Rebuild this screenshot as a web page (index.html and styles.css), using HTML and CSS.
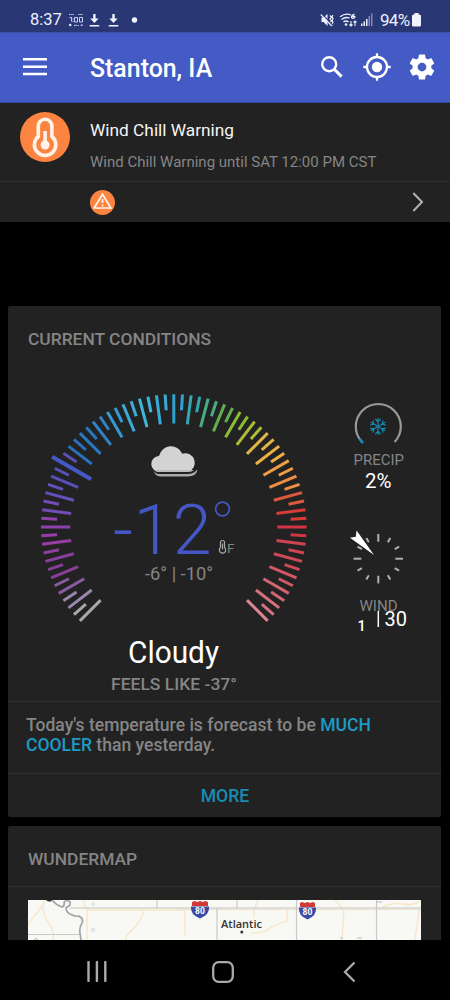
FILE: index.html
```html
<!DOCTYPE html>
<html lang="en">
<head>
<meta charset="utf-8">
<title>Stanton, IA</title>
<link rel="stylesheet" href="styles.css">
</head>
<body>
<div class="phone">
  <header class="status">
    <span class="clock">8:37</span>
    <svg class="status-left" width="80" height="16" viewBox="0 0 80 16">
      <g fill="none" stroke="#c9d0f2" stroke-width="1">
        <path d="M1 1.5h5M10 1.5h5" stroke-dasharray="1.5 .7"/>
        <path d="M1.5 4.5h2v4M6.500 4.500h3v4.500h-3zM11.500 4.500h3v4.500h-3z"/>
        <path d="M5 5.500v1M5 8v1"/>
        <path d="M6 12.500h2.500M9.500 12.500h2M12.500 12.500h2.500M8 11.500v2M14 11v2" stroke-dasharray="1.300 .7"/>
      </g>
      <circle cx="2.200" cy="12" r="1.300" fill="#dce1fa"/>
      <g fill="#f1f3ff">
        <path d="M25.200 1h2.400v4.500h3L26.400 10 22.200 5.500h3zM21.700 12h9.500v1.400h-9.500zM44.300 1h2.400v4.500h3L45.500 10 41.300 5.500h3zM40.800 12h9.500v1.400h-9.500z"/>
        <circle cx="66.500" cy="7" r="2.700"/>
      </g>
    </svg>
    <svg class="status-right" width="56" height="16" viewBox="0 0 56 16">
      <path d="M1.500 4.500h2l4-3.500v12l-4-4h-2z" fill="#edf0ff"/>
      <path d="M10 2.500l1.500 1.800-1.500 1.800 1.500 1.800-1.500 1.800 1.500 1.800M13 2l-1 1.800 1 1.800-1 1.800 1 1.800-1 1.800 1 1.800" fill="none" stroke="#edf0ff" stroke-width="1.200"/>
      <path d="M1.500 .5L13 12.500" stroke="#2b3878" stroke-width="1.200"/>
      <path d="M.8 1.500l11 11.500" stroke="#edf0ff" stroke-width="1.100"/>
      <g fill="none" stroke="#edf0ff" stroke-width="1.300">
        <path d="M20 3.800Q25.500-.2 31 2M21.500 6.500q4-3 8-1.500M23.500 9q2.500-2 5 0M34.500 1q-3 1-3 3.500 1.500 1.500 3 0t-2.500-1.500"/>
        <path d="M31 8v5m-1.500-1.500L31 13l1.500-1.500M35 13V8m-1.500 1.500L35 8l1.500 1.500" stroke-width="1.100"/>
      </g>
      <circle cx="26" cy="11.500" r="1.300" fill="#edf0ff"/>
      <path d="M41 10.500h1.500V13H41zM43.500 8.500H45V13h-1.500zM46 6h1.500v7H46z" fill="#edf0ff"/>
      <path d="M48.500 3H50v10h-1.500zM51 .5h1.500V13H51z" fill="#8089b6"/>
    </svg>
    <span class="percent">94%</span>
    <svg class="battery" width="9" height="14" viewBox="0 0 9 14"><path d="M2.500 0h4v1.500h1Q9 1.500 9 3v9q0 1.500-1.500 1.500h-6Q0 13.500 0 12V3q0-1.500 1.500-1.500h1z" fill="#f1f3ff"/></svg>
  </header>

  <nav class="appbar">
    <svg class="menu" width="24" height="18" viewBox="0 0 24 18"><path d="M0 1.300h24M0 8.700h24M0 16h24" stroke="#fff" stroke-width="2.500"/></svg>
    <h1 class="place">Stanton, IA</h1>
    <svg class="action search" width="24" height="24" viewBox="0 0 24 24" fill="none" stroke="#fff"><circle cx="9.200" cy="9.200" r="7" stroke-width="2.400"/><path d="M14.300 14.300l7.300 7.300" stroke-width="3"/></svg>
    <svg class="action locate" width="28" height="28" viewBox="0 0 28 28" fill="none" stroke="#fff" stroke-width="2.300"><circle cx="14" cy="14" r="10"/><circle cx="14" cy="14" r="5.200" fill="#fff" stroke="none"/><path d="M14 .3v4M14 23.700v4M.3 14h4M23.700 14h4"/></svg>
    <svg class="action gear" width="30" height="30" viewBox="0 0 24 24" fill="#fff"><path d="M19.430 12.980c.04-.32.07-.64.07-.98s-.03-.66-.07-.98l2.110-1.650c.19-.15.24-.42.12-.64l-2-3.460c-.12-.22-.39-.3-.61-.22l-2.490 1c-.52-.4-1.080-.73-1.690-.98l-.38-2.650C14.460 2.180 14.250 2 14 2h-4c-.25 0-.46.18-.49.42l-.38 2.650c-.61.25-1.170.59-1.690.98l-2.490-1c-.23-.09-.49 0-.61.22l-2 3.460c-.13.22-.07.49.12.64l2.110 1.650c-.04.32-.07.65-.07.98s.03.66.07.98l-2.110 1.650c-.19.15-.24.42-.12.64l2 3.460c.12.22.39.3.61.22l2.490-1c.52.4 1.080.73 1.690.98l.38 2.650c.03.24.24.42.49.42h4c.25 0 .46-.18.49-.42l.38-2.650c.61-.25 1.170-.59 1.690-.98l2.490 1c.23.09.49 0 .61-.22l2-3.460c.12-.22.07-.49-.12-.64zM12 15.500A3.500 3.500 0 1 1 12 8.500a3.500 3.500 0 0 1 0 7z"/></svg>
  </nav>

  <section class="alert">
    <div class="alert-main">
      <svg class="alert-icon" width="50" height="50" viewBox="0 0 50 50">
        <circle cx="25" cy="25" r="25" fill="#fd8440"/>
        <path d="M18.300 24.500V14a6.800 6.800 0 0 1 13.600 0v10.500a10.700 10.700 0 1 1-13.600 0z" fill="none" stroke="#fff3ea" stroke-width="3.600"/>
        <circle cx="25.100" cy="33" r="4.500" fill="#fff3ea"/><path d="M25.100 33V19" stroke="#fff3ea" stroke-width="3.600"/>
      </svg>
      <div class="alert-text">
        <h2 class="alert-title">Wind Chill Warning</h2>
        <p class="alert-desc">Wind Chill Warning until SAT 12:00 PM CST</p>
      </div>
    </div>
    <div class="alert-more">
      <svg width="25" height="25" viewBox="0 0 25 25"><circle cx="12.500" cy="12.500" r="12.500" fill="#fd8440"/><path d="M12.500 4.200L20.800 18H4.200z" fill="none" stroke="#fff3ea" stroke-width="1.700"/><path d="M12.500 9v4M12.500 14.500v1.700" stroke="#fff3ea" stroke-width="1.700"/></svg>
      <svg width="12" height="20" viewBox="0 0 12 20"><path d="M1.300 1l8.700 9-8.700 9" fill="none" stroke="#b2b2b2" stroke-width="2"/></svg>
    </div>
  </section>

  <main class="cards">
    <section class="card conditions">
      <h2 class="heading">CURRENT CONDITIONS</h2>
      <svg class="dials" width="433" height="334" viewBox="8 367 433 334">
        <g id="ticks"></g>
        <g>
          <path d="M160 476.500h28q8 0 9.500-6.500l-44 1q2 5 6.500 5.500z" fill="#aaa"/>
          <path d="M160 474h28q8 0 10-7l-46 1q2 6 8 6z" fill="#222"/>
          <path d="M159.500 472a8 8 0 0 1-.5-16 12.300 12.300 0 0 1 23.300-2.300 9.200 9.200 0 1 1 5.700 18.300z" fill="#d3d3d3"/>
          <path d="M154 470q2.500 2 6 2h28q4 0 6-2z" fill="#bcbcbc"/>
        </g>
        <g class="temperature">
          <text x="113" y="554" font-size="70" textLength="98.500">-12</text>
          <circle cx="222.500" cy="509" r="6.900" fill="none" stroke="#4557c4" stroke-width="1.700"/>
        </g>
        <g fill="none" stroke="#aaa" stroke-width="1.200"><path d="M220.500 547.500v-5a2 2 0 0 1 4 0v5a3.200 3.200 0 1 1-4 0zM222.500 549.500v-6"/></g>
        <text class="muted" x="227" y="553" font-size="13.500">F</text>
        <text class="muted" x="145" y="580" font-size="17.500" textLength="68" lengthAdjust="spacingAndGlyphs">-6° | -10°</text>
        <text class="summary" x="128" y="662.500" font-size="30.500" textLength="91" lengthAdjust="spacingAndGlyphs">Cloudy</text>
        <text class="feels" x="111" y="689.500" font-size="17.300" textLength="126" lengthAdjust="spacingAndGlyphs">FEELS LIKE -37°</text>

        <path d="M362 442a22.500 22.500 0 1 1 32.600 0" fill="none" stroke="#999" stroke-width="2.200"/>
        <path d="M363 443q-2-2-3.200-4.500" fill="none" stroke="#168db4" stroke-width="2.500"/>
        <g id="snow" fill="none" stroke="#168db4" stroke-width="1.100"></g>
        <text class="muted" x="353.500" y="465" font-size="15" textLength="50.500" lengthAdjust="spacingAndGlyphs">PRECIP</text>
        <text class="value" x="365" y="487.500" font-size="20" textLength="26.500" lengthAdjust="spacingAndGlyphs">2%</text>
        <g id="compass" stroke="#b0b0b0" stroke-width="2"></g>
        <path d="M374 555l-24-17.200 5.800-1.100.8-6.200z" fill="#fff"/>
        <text class="muted" x="359.500" y="611" font-size="15" textLength="38" lengthAdjust="spacingAndGlyphs">WIND</text>
        <path d="M378.300 611v16" stroke="#fff" stroke-width="1.500"/>
        <text class="value" x="384.500" y="625.500" font-size="20" textLength="22.500">30</text>
        <text class="calm" x="357.500" y="630.500" font-size="14.500">1</text>
      </svg>
      <p class="forecast">Today's temperature is forecast to be <b>MUCH COOLER</b> than yesterday.</p>
      <a class="more">MORE</a>
    </section>

    <section class="card map-card">
      <h2 class="heading map-heading">WUNDERMAP</h2>
      <svg class="map" width="393" height="40" viewBox="28 900 393 40">
        <path d="M28 900h393v40H28z" fill="#f8f8f4"/>
        <g fill="none" stroke="#f8e5c7" stroke-width="1.300">
          <path d="M28 924l12-15 6-9M44 900q-3 12 4 22t5 18M87 940v-30h98v25M83 900l2 7M144 910q-3 12-11 19t-7 11M258 900l-4 10v8M251 933q13 0 18-4t18-8v-11M335 900l9 10-2 30M381 908q10-6 22-4t18-4M415 940l4-30"/>
        </g>
        <path d="M70 908h351" stroke="#d4d4d0" stroke-width="1.500"/>
        <path d="M178 909.500h243" stroke="#efe3ce" stroke-width="1"/>
        <path d="M157 900v8M217 908v32M237 900v8M296.500 900v40M376.500 900v40M28 934.500h53" stroke="#c8c8ca" stroke-width="1.200"/>
        <path d="M52 900q4 5 10 7 3-1 2-5l3-2 3 2v3l-4 3q0 4 4 6 5 3 9 2 5 3 3 7-3 5-2 10l1 7" fill="none" stroke="#a2a5ac" stroke-width="1.700"/>
        <path d="M46 900h6l-1 1.500h-3z" fill="#333"/>
        <circle cx="93" cy="904" r="2" fill="#e2e3e3"/><circle cx="93" cy="930" r="2.200" fill="#e2e3e3"/>
        <path d="M34 940l2-2 2 2M376 902h6M340 938h3M357 938h5" stroke="#bbb" fill="none"/>
        <g><path d="M192 902l3-1 2 1 3-1 3 1 2-1 3 1v4h-16z" fill="#d13a36"/><path d="M191 906.500h18q1 8-9 12-10-4-9-12z" fill="#3b4ba3"/><text class="route" x="200" y="914">80</text></g>
        <g><path d="M300 903l2-1 3 1 2.500-1 2.500 1 3-1 2 1v4h-15z" fill="#d13a36"/><path d="M299 907.500h17q1 8-8.500 12-9.500-4-8.500-12z" fill="#3b4ba3"/><text class="route" x="307.500" y="915">80</text></g>
        <text class="town" x="221" y="927.500" textLength="41">Atlantic</text>
        <circle cx="241.800" cy="932" r="1.500" fill="#333"/>
      </svg>
    </section>
  </main>

  <footer class="navbar">
    <svg width="20" height="21" viewBox="0 0 20 21"><path d="M1.500 1v19M9.900 1v19M18.300 1v19" stroke="#aaa" stroke-width="2.400" stroke-linecap="round"/></svg>
    <svg class="home" width="22" height="22" viewBox="0 0 22 22"><rect x="1.200" y="1.200" width="19.600" height="19.600" rx="5.500" fill="none" stroke="#aaa" stroke-width="2.300"/></svg>
    <svg width="13" height="22" viewBox="0 0 13 22"><path d="M11.500 1.500L2 11l9.500 9.500" fill="none" stroke="#aaa" stroke-width="2.300"/></svg>
  </footer>
</div>
<script src="dials.js"></script>
</body>
</html>
```
FILE: styles.css
```css
* { box-sizing: border-box; }
body { margin: 0; background: #000; font-family: Roboto, "Liberation Sans", sans-serif; }
h1, h2, p { margin: 0; }
svg { display: block; flex: none; }
.phone { width: 450px; height: 1000px; display: flex; flex-direction: column; overflow: hidden; }

.status { height: 32px; flex: none; display: flex; align-items: flex-start; padding: 12px 29px 0 30px; background: #2a3775; color: #edf0ff; }
.clock { width: 38px; font-size: 16.500px; line-height: 16px; }
.status-left { margin-top: 1px; }
.status-right { margin: 1px 0 0 172px; }
.percent { width: 32px; margin-left: 4px; font-size: 17px; line-height: 16px; letter-spacing: -.7px; }
.battery { margin-top: 1px; }

.appbar { height: 71px; flex: none; display: flex; align-items: center; padding: 0 13px 2px 23px; background: #445bc5; border-top: 1px solid #3c50a9; border-bottom: 1px solid #39479a; }
.place { flex: 1; margin: 4px 0 0 43px; color: #fff; font-size: 24.900px; line-height: 30px; font-weight: 500; white-space: nowrap; }
.search { margin-right: 19px; }
.locate { margin-right: 16px; }

.alert { height: 119px; flex: none; background: #222; }
.alert-main { height: 79px; display: flex; gap: 20px; padding: 9px 20px 0; border-bottom: 1px solid #303030; }
.alert-text { display: flex; flex-direction: column; gap: 12px; padding-top: 8px; white-space: nowrap; }
.alert-title { color: #f5f5f5; font-size: 17.300px; line-height: 21px; font-weight: 400; }
.alert-desc { color: #858585; font-size: 15px; line-height: 18px; }
.alert-more { height: 40px; display: flex; align-items: center; justify-content: space-between; padding: 0 26px 0 90px; }

.cards { flex: 1; display: flex; flex-direction: column; gap: 9px; padding: 84px 8px 0; overflow: hidden; }
.card { flex: none; width: 433px; background: #222; border-radius: 2px; }
.conditions { height: 511px; }
.heading { height: 61px; padding: 22px 20px 0; color: #858585; font-size: 17.400px; line-height: 22px; font-weight: 500; }
.temperature { fill: #4557c4; font-weight: 300; }
.muted { fill: #858585; }
.summary { fill: #fff; }
.feels { fill: #858585; font-weight: 500; }
.value { fill: #fff; }
.calm { fill: #fff; font-weight: 500; }
.forecast { height: 73px; padding: 13px 17px 0 18px; border-top: 1px solid #303030; border-bottom: 1px solid #303030; color: #858585; font-size: 17.550px; line-height: 20px; font-weight: 500; }
.forecast b { color: #1d9ac6; font-weight: 500; }
.more { display: block; height: 43px; padding-left: 1px; color: #168db4; text-align: center; font-size: 17.600px; line-height: 44px; font-weight: 500; }
.map-card { height: 200px; }
.map-heading { border-bottom: 1px solid #303030; }
.map { margin: 13px 0 0 20px; }
.route { fill: #fff; font-size: 8.500px; font-weight: 700; text-anchor: middle; }
.town { fill: #333; font-family: "Open Sans", sans-serif; font-size: 11px; font-weight: 600; }

.navbar { height: 60px; flex: none; display: flex; align-items: center; justify-content: space-between; padding: 3px 94px 0 87px; background: #000; }
.home { margin-right: 4px; }
```
FILE: dials.js
```js
const ns = 'http://www.w3.org/2000/svg';

function addShape(parent, tag, attrs) {
  const el = document.createElementNS(ns, tag);
  for (const key in attrs) el.setAttribute(key, attrs[key]);
  parent.appendChild(el);
}

function addRay(parent, cx, cy, degrees, inner, outer, attrs) {
  const a = degrees * Math.PI / 180;
  addShape(parent, 'line', {
    x1: cx + inner * Math.cos(a), y1: cy - inner * Math.sin(a),
    x2: cx + outer * Math.cos(a), y2: cy - outer * Math.sin(a), ...attrs
  });
}

// One colour for every pair of ticks, coldest first
const scale = ['#aaa5ab', '#9a87ad', '#895aa2', '#873f98', '#8a3f9c', '#983da6', '#8d42ab',
  '#734bb5', '#6550bb', '#584fbb', '#4657c7', '#2870be', '#2978bf', '#2f84c7', '#359acf',
  '#3eabd6', '#3eb7dc', '#37aed7', '#30a2d2', '#35a5b1', '#49ad82', '#61b04d', '#8cbe35',
  '#adbd38', '#e0b547', '#eeb044', '#ef9f43', '#ef8e42', '#dd593e', '#d53d35', '#d33443',
  '#cf4353', '#cf4957', '#d35766', '#d36471', '#d6717e', '#dc8591'];
const ticks = document.getElementById('ticks');
for (let i = 0; i <= 72; i++) {
  const current = i === 20;
  addRay(ticks, 173.8, 527, 225 - i * 3.75,
    current ? 95.5 : i % 2 ? 117 : 103.5, current ? 140.5 : 132.8,
    { stroke: i === 19 || i === 21 ? '#5950b5' : scale[Math.floor(i / 2)], 'stroke-width': current ? 4.2 : 3 });
}

const compass = document.getElementById('compass');
for (let i = 0; i < 12; i++) addRay(compass, 378.3, 558.7, i * 30, i % 3 ? 19 : 17, i % 3 ? 24 : 24.7);

const snow = document.getElementById('snow');
for (let i = 0; i < 6; i++) {
  addShape(snow, 'path', {
    d: 'M378 426.500V418M375.300 419l2.700 2.800 2.700-2.800',
    transform: `rotate(${i * 60} 378 426.500)`
  });
}
```
